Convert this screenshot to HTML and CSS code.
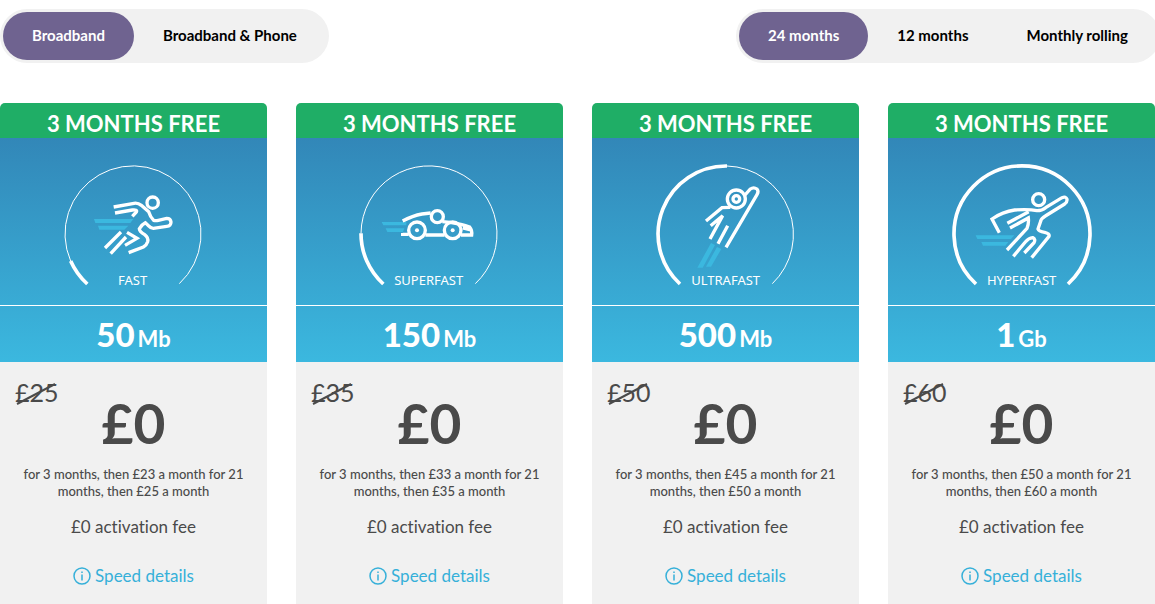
FILE: index.html
```html
<!DOCTYPE html>
<html lang="en">
<head>
  <meta charset="UTF-8">
  <meta name="viewport" content="width=device-width, initial-scale=1.0">
  <title>Broadband packages</title>
  <link rel="stylesheet" href="styles.css">
</head>
<body>
  <nav class="filters">
    <div class="toggle">
      <button type="button" class="active">Broadband</button>
      <button type="button">Broadband &amp; Phone</button>
    </div>
    <div class="toggle toggle-term">
      <button type="button" class="active">24 months</button>
      <button type="button">12 months</button>
      <button type="button">Monthly rolling</button>
    </div>
  </nav>

  <main class="packages">
    <article class="package">
      <h2 class="offer">3 MONTHS FREE</h2>
      <div class="speed">
        <svg class="gauge" viewBox="3 0 495 435">
          <path class="thin" d="M62 318A204 204 0 1 1 388 386"/>
          <path class="thick" d="M62 318A205 205 0 0 0 112 387"/>
          <path class="trail" d="M132 192h118l-9 12H136zM144 212h91l-12 12h-75z"/>
          <g class="figure">
            <circle cx="308" cy="143" r="17"/>
            <path d="M191 156L252 145Q264 143 274 151L296 170Q301 186 311 196Q317 198 325 196L350 190Q362 190 363 201Q363 213 350 214L310 220Q302 220 295 212L286 203Q274 209 268 221Q268 229 284 239Q296 248 293 260Q290 270 280 276L236 293"/>
            <path d="M195 174L247 165Q263 163 259 171L247 184M213 231L165 279M228 246L182 296M231 232L261 250L225 271"/>
          </g>
          <text x="248" y="390">FAST</text>
        </svg>
        <p class="rate">50<span>Mb</span></p>
      </div>
      <div class="pricing">
        <p class="was">£25<svg viewBox="0 0 40 22"><path d="M1 21L39 1"/></svg></p>
        <p class="now">£0</p>
        <p class="terms">for 3 months, then £23 a month for 21 months, then £25 a month</p>
        <p class="fee">£0 activation fee</p>
        <a class="details" href="#"><svg viewBox="0 0 18 18"><circle cx="9" cy="9" r="8"/><path d="M9 7.500v6M9 4.500v1.500"/></svg>Speed details</a>
      </div>
    </article>

    <article class="package">
      <h2 class="offer">3 MONTHS FREE</h2>
      <div class="speed">
        <svg class="gauge" viewBox="3 0 495 435">
          <path class="thin" d="M45 235A204 204 0 1 1 388 386"/>
          <path class="thick" d="M45 235A205 205 0 0 0 112 387"/>
          <path class="trail" d="M107 201h74v10h-69zM119 220h56l-4 11h-47z"/>
          <g class="figure">
            <circle cx="274" cy="185" r="18"/>
            <circle cx="213" cy="226" r="25"/>
            <circle cx="320" cy="226" r="25"/>
            <path d="M170 198Q200 182 228 177L254 174M289 200L312 202Q347 207 371 216Q379 225 377 240H345M238 240H296M170 234V238H188M350 219L374 225"/>
          </g>
          <circle class="dot" cx="213" cy="226" r="6"/>
          <circle class="dot" cx="320" cy="226" r="6"/>
          <text x="248" y="390">SUPERFAST</text>
        </svg>
        <p class="rate">150<span>Mb</span></p>
      </div>
      <div class="pricing">
        <p class="was">£35<svg viewBox="0 0 40 22"><path d="M1 21L39 1"/></svg></p>
        <p class="now">£0</p>
        <p class="terms">for 3 months, then £33 a month for 21 months, then £35 a month</p>
        <p class="fee">£0 activation fee</p>
        <a class="details" href="#"><svg viewBox="0 0 18 18"><circle cx="9" cy="9" r="8"/><path d="M9 7.500v6M9 4.500v1.500"/></svg>Speed details</a>
      </div>
    </article>

    <article class="package">
      <h2 class="offer">3 MONTHS FREE</h2>
      <div class="speed">
        <svg class="gauge" viewBox="3 0 495 435">
          <path class="thin" d="M255 33A205 205 0 0 1 391 386"/>
          <path class="thick" d="M255 33A204 204 0 0 0 114 387"/>
          <path class="trail" d="M207 264l12 6-37 68h-16zM225 276l13 6-31 53h-15z"/>
          <g class="figure">
            <circle cx="283" cy="132" r="27"/>
            <circle cx="283" cy="132" r="10"/>
            <path d="M309 120L325 102Q335 95 345 102Q351 109 345 119L252 277M265 157L240 158L192 198M206 212L242 182L204 252M257 212L228 266"/>
          </g>
          <text x="251" y="390">ULTRAFAST</text>
        </svg>
        <p class="rate">500<span>Mb</span></p>
      </div>
      <div class="pricing">
        <p class="was">£50<svg viewBox="0 0 40 22"><path d="M1 21L39 1"/></svg></p>
        <p class="now">£0</p>
        <p class="terms">for 3 months, then £45 a month for 21 months, then £50 a month</p>
        <p class="fee">£0 activation fee</p>
        <a class="details" href="#"><svg viewBox="0 0 18 18"><circle cx="9" cy="9" r="8"/><path d="M9 7.500v6M9 4.500v1.500"/></svg>Speed details</a>
      </div>
    </article>

    <article class="package">
      <h2 class="offer">3 MONTHS FREE</h2>
      <div class="speed">
        <svg class="gauge" viewBox="3 0 495 435">
          <path class="thick" d="M114 387A204 204 0 1 1 390 387"/>
          <path class="trail" d="M113 241h116l-10 11H118zM130 261h81l-9 11h-67z"/>
          <g class="figure">
            <circle cx="302" cy="134" r="18"/>
            <path d="M184 233L162 192Q194 170 230 165Q272 162 297 167Q312 167 323 158L372 128Q384 123 387 133Q388 141 380 147L322 183Q310 190 308 199L300 222Q302 229 320 232Q336 236 333 244L281 308"/>
            <path d="M208 205L272 170M216 219L271 189Q273 205 267 220L207 285M226 304L262 261Q272 249 284 248Q294 252 288 263L259 294"/>
          </g>
          <text x="251" y="390">HYPERFAST</text>
        </svg>
        <p class="rate">1<span>Gb</span></p>
      </div>
      <div class="pricing">
        <p class="was">£60<svg viewBox="0 0 40 22"><path d="M1 21L39 1"/></svg></p>
        <p class="now">£0</p>
        <p class="terms">for 3 months, then £50 a month for 21 months, then £60 a month</p>
        <p class="fee">£0 activation fee</p>
        <a class="details" href="#"><svg viewBox="0 0 18 18"><circle cx="9" cy="9" r="8"/><path d="M9 7.500v6M9 4.500v1.500"/></svg>Speed details</a>
      </div>
    </article>
  </main>
</body>
</html>
```
FILE: styles.css
```css
* {
  margin: 0;
  padding: 0;
  box-sizing: border-box;
}

body {
  font-family: Lato, "Open Sans", sans-serif;
  font-variant-ligatures: none;
  background-color: #fff;
  color: #4a4a4a;
  display: flex;
  flex-direction: column;
  min-height: 100vh;
  overflow-x: hidden;
}

/* Filters */
.filters {
  display: flex;
  justify-content: space-between;
  padding-top: 9px;
  margin-bottom: 40px;
}

.toggle {
  display: flex;
  padding: 3px;
  background-color: #f1f1f1;
  border-radius: 27px;
}

.toggle-term {
  margin-right: -5px;
}

.toggle button {
  height: 48px;
  padding: 0 29px 2px;
  border: none;
  border-radius: 24px;
  background: none;
  font-family: inherit;
  font-size: 15px;
  font-weight: 700;
  color: #000;
  cursor: pointer;
}

.toggle .active {
  background-color: #6f6390;
  color: #fff;
}

/* Packages */
.packages {
  flex: 1;
  display: grid;
  grid-template-columns: repeat(4, 1fr);
  gap: 29px;
}

.package {
  display: flex;
  flex-direction: column;
  border-radius: 5px 5px 0 0;
  overflow: hidden;
  background-color: #f1f1f1;
  text-align: center;
}

.offer {
  height: 35px;
  padding-top: 3px;
  background-color: #1fae66;
  color: #fff;
  font-size: 22px;
  line-height: 35px;
  font-weight: 700;
}

.speed {
  padding-top: 17px;
  background: linear-gradient(#3287b8, #3bb8df);
  color: #fff;
}

.gauge {
  display: block;
  width: 165px;
  height: 145px;
  margin: 0 auto 5px;
  fill: none;
  stroke: #fff;
}

.thin {
  stroke-width: 3;
}

.thick {
  stroke-width: 11;
}

.figure {
  stroke-width: 10;
}

.trail {
  fill: #3bb8df;
  stroke: none;
}

.dot {
  fill: #fff;
  stroke: none;
}

.gauge text {
  fill: #fff;
  stroke: none;
  font-family: "Noto Sans", sans-serif;
  font-size: 39px;
  text-anchor: middle;
}

.rate {
  height: 57px;
  border-top: 1px solid #fff;
  font-size: 33px;
  line-height: 56px;
  font-weight: 900;
}

.rate span {
  margin-left: 3px;
  font-size: 22px;
  font-weight: 700;
}

.pricing {
  position: relative;
  padding: 31px 16px 0;
}

.was {
  position: absolute;
  top: 14px;
  left: 15px;
  font-size: 25px;
  line-height: 32px;
}

.was svg {
  position: absolute;
  top: 7px;
  left: 1px;
  width: 40px;
  height: 22px;
  stroke: #4a4a4a;
  stroke-width: 2;
}

.now {
  font-size: 55px;
  line-height: 60px;
  font-weight: 700;
  margin-bottom: 13px;
}

.terms {
  font-size: 13px;
  line-height: 17px;
  font-weight: 500;
  margin-bottom: 16px;
}

.fee {
  font-size: 17px;
  line-height: 22px;
  margin-bottom: 27px;
}

.details {
  display: flex;
  justify-content: center;
  align-items: center;
  gap: 4px;
  font-size: 17px;
  line-height: 22px;
  color: #36b0d9;
  text-decoration: none;
}

.details svg {
  width: 18px;
  height: 18px;
  fill: none;
  stroke: currentColor;
  stroke-width: 1.500;
}
```
